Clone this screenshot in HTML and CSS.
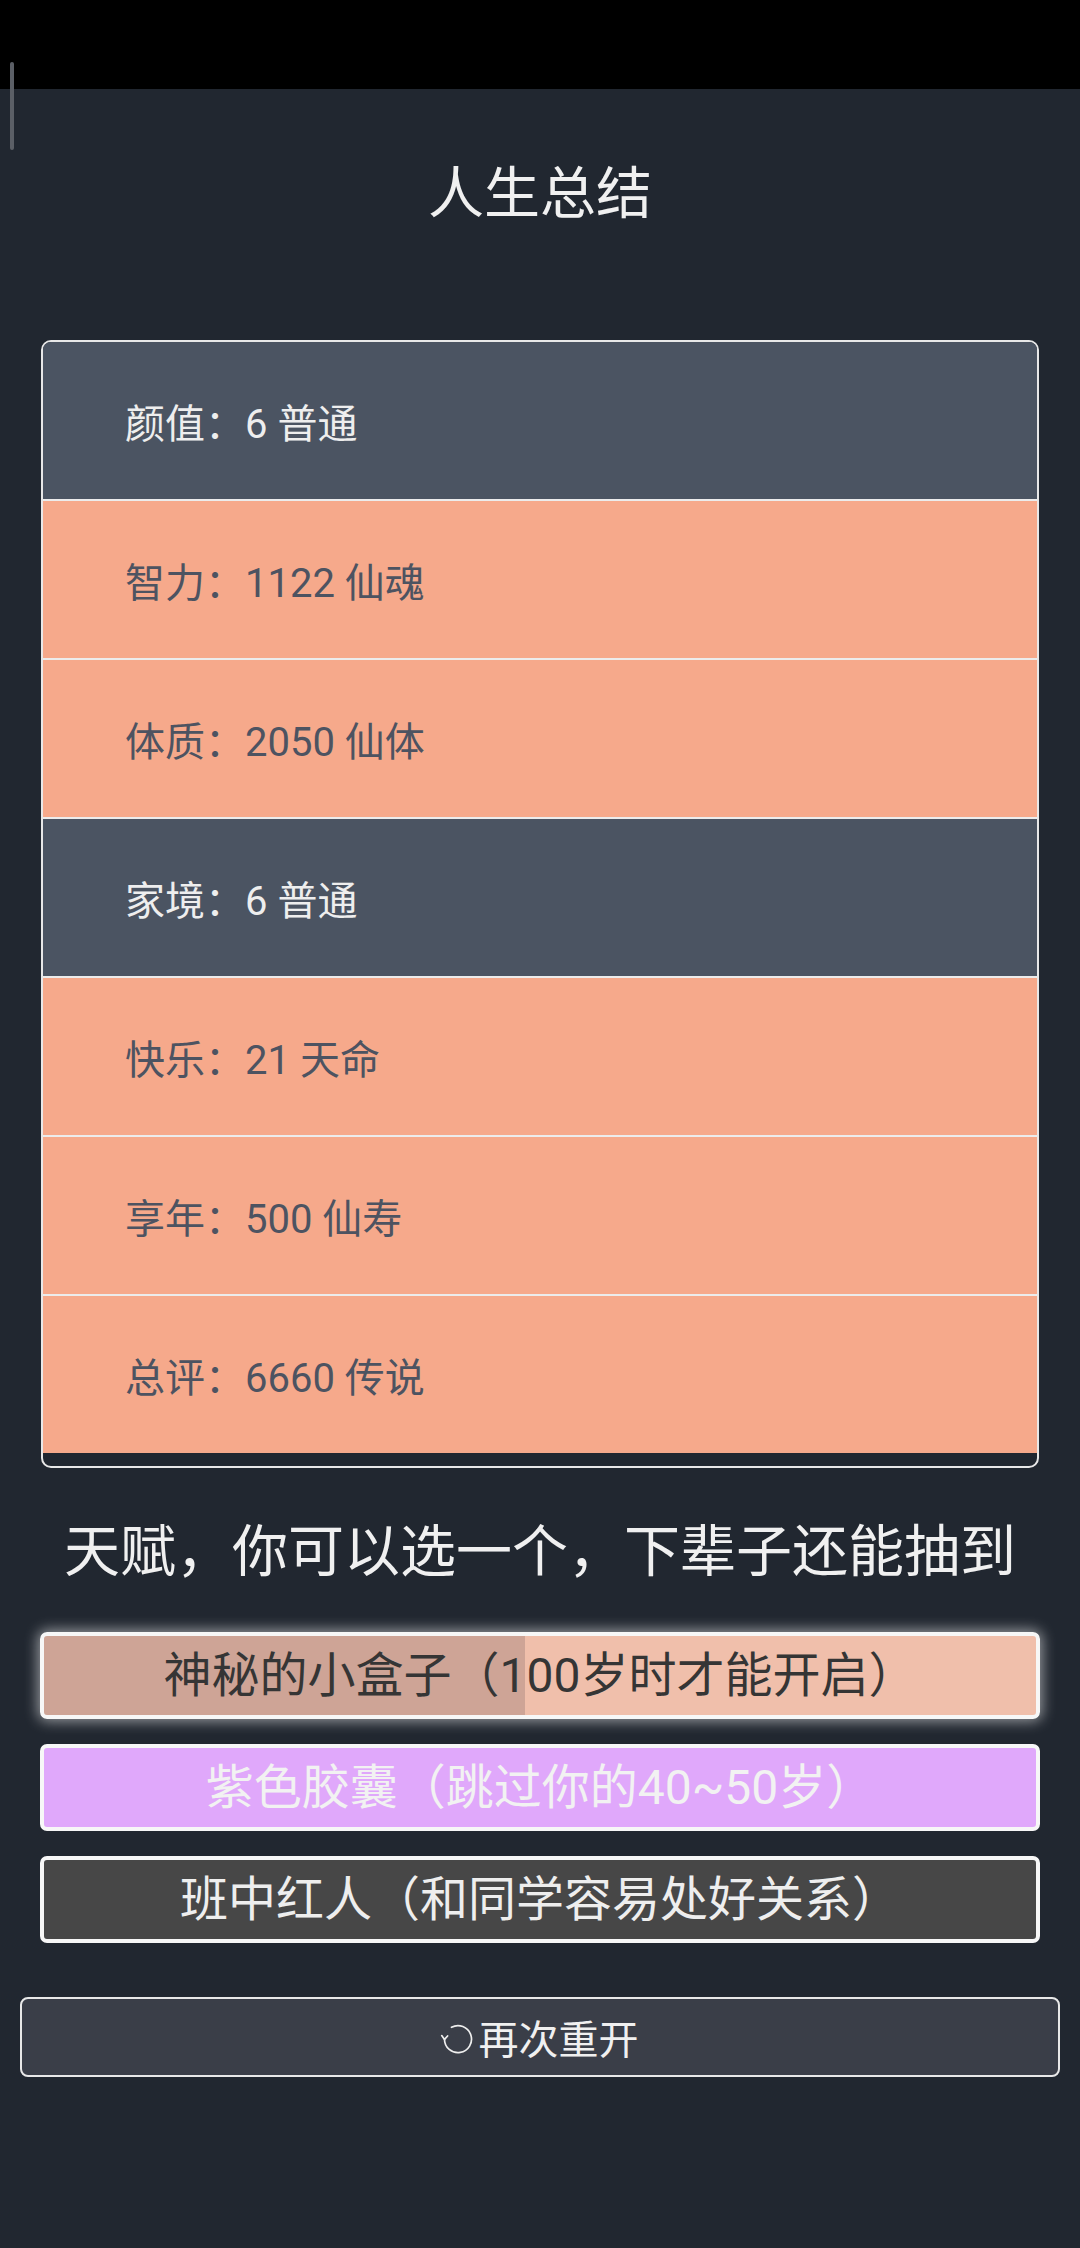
FILE: index.html
```html
<!DOCTYPE html>
<html lang="zh-CN">
<head>
    <meta charset="UTF-8">
    <meta name="viewport" content="width=device-width, initial-scale=1.0">
    <title>人生总结</title>
    <link rel="stylesheet" href="styles.css">
</head>
<body>
    <div class="status-bar"></div>
    <div class="scroll-thumb"></div>

    <div class="page">
        <h1 class="title">人生总结</h1>

        <ul class="summary">
            <li class="row normal">颜值：6 普通</li>
            <li class="row high">智力：1122 仙魂</li>
            <li class="row high">体质：2050 仙体</li>
            <li class="row normal">家境：6 普通</li>
            <li class="row high">快乐：21 天命</li>
            <li class="row high">享年：500 仙寿</li>
            <li class="row high">总评：6660 传说</li>
        </ul>

        <h2 class="subtitle">天赋，你可以选一个，下辈子还能抽到</h2>

        <div class="talents">
            <button class="talent orange selected" style="--p: 48.5%">神秘的小盒子（100岁时才能开启）</button>
            <button class="talent purple">紫色胶囊（跳过你的40~50岁）</button>
            <button class="talent plain">班中红人（和同学容易处好关系）</button>
        </div>

        <button class="restart">
            <svg class="restart-icon" viewBox="0 0 32 32" width="32" height="32">
                <path d="M9.5 4.3 A13.5 13.5 0 1 1 2.5 16" fill="none" stroke="#eeeeee" stroke-width="1.7" stroke-linecap="round"/>
                <path d="M-0.3 12.6 L2.5 16.4 L5.6 13" fill="none" stroke="#eeeeee" stroke-width="1.7" stroke-linecap="round" stroke-linejoin="round"/>
            </svg>再次重开
        </button>
    </div>
</body>
</html>
```

FILE: styles.css
```css
body {
    margin: 0;
    background-color: #212730;
    color: #f0f0f0;
    font-family: Roboto, "Noto Sans CJK SC", sans-serif;
}
.status-bar {
    height: 89px;
    background: #000;
}
.scroll-thumb {
    position: absolute;
    left: 10px;
    top: 62px;
    width: 4px;
    height: 88px;
    border-radius: 2px;
    background: #5b5f66;
}
.page {
    padding: 0 20px;
}
.title {
    margin: 65px 0 0;
    font-size: 56px;
    font-weight: normal;
    line-height: 80px;
    text-align: center;
}
.summary {
    list-style: none;
    margin: 106px 21px 0;
    padding: 0 0 13px;
    border: 2px solid #e8e8e8;
    border-radius: 10px;
    overflow: hidden;
}
.row {
    height: 157px;
    display: flex;
    align-items: center;
    padding-left: 82px;
    font-size: 40px;
    border-top: 2px solid #ececec;
}
.row:first-child {
    border-top: none;
}
.row.normal {
    background: #4b5462;
    color: #eeeeee;
}
.row.high {
    background: #f6a98b;
    color: #4d5361;
}
.subtitle {
    margin: 44px 0 0;
    font-size: 56px;
    font-weight: normal;
    line-height: 80px;
    text-align: center;
}
.talents {
    display: flex;
    flex-direction: column;
    gap: 25px;
    margin: 40px 20px 0;
}
.talent {
    height: 87px;
    border: 4px solid #f7f7f7;
    border-radius: 7px;
    font-family: Roboto, "Noto Sans CJK SC", sans-serif;
    font-size: 48px;
    padding: 0;
    line-height: 1;
}
.talent.orange {
    color: #353535;
    background: linear-gradient(to right, #cea496 var(--p), #f0bfab var(--p));
}
.talent.selected {
    box-shadow: 0 0 14px 2px rgba(255, 255, 255, 0.55);
}
.talent.purple {
    color: #f2f2f2;
    background: #e0a8fb;
}
.talent.plain {
    color: #eeeeee;
    background: #474747;
}
.restart {
    display: flex;
    align-items: center;
    justify-content: center;
    width: 100%;
    height: 80px;
    margin-top: 54px;
    padding: 0;
    background: #3a3e48;
    border: 2px solid #e8e8e8;
    border-radius: 8px;
    color: #f0f0f0;
    font-family: Roboto, "Noto Sans CJK SC", sans-serif;
    font-size: 40px;
}
.restart-icon {
    margin-right: 5px;
    margin-top: 4px;
    overflow: visible;
}
```
